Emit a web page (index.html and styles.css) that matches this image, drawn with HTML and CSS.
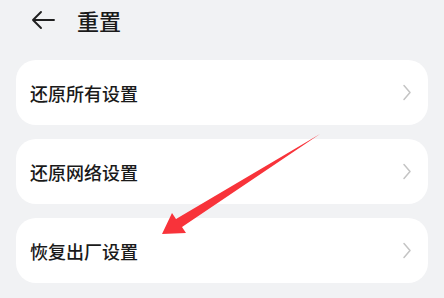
FILE: index.html
```html
<!DOCTYPE html>
<html lang="zh-CN">
<head>
    <meta charset="UTF-8">
    <meta name="viewport" content="width=device-width, initial-scale=1.0">
    <title>重置</title>
    <link rel="stylesheet" href="styles.css">
</head>
<body>

    <!-- 标题栏 -->
    <div class="title-bar">
        <svg class="back-icon" width="24" height="20" viewBox="0 0 24 20">
            <path d="M23 10H2M10 2L2 10L10 18" fill="none" stroke="#1f1f1f" stroke-width="1.9" stroke-linecap="round" stroke-linejoin="round"/>
        </svg>
        <h1>重置</h1>
    </div>

    <div class="list">
        <div class="card">
            <span>还原所有设置</span>
            <svg class="chevron" width="10" height="17" viewBox="0 0 10 17"><path d="M2 1.5L8 8.5L2 15.5" fill="none" stroke="#c4c4c4" stroke-width="1.5" stroke-linecap="round" stroke-linejoin="round"/></svg>
        </div>
        <div class="card">
            <span>还原网络设置</span>
            <svg class="chevron" width="10" height="17" viewBox="0 0 10 17"><path d="M2 1.5L8 8.5L2 15.5" fill="none" stroke="#c4c4c4" stroke-width="1.5" stroke-linecap="round" stroke-linejoin="round"/></svg>
        </div>
        <div class="card">
            <span>恢复出厂设置</span>
            <svg class="chevron" width="10" height="17" viewBox="0 0 10 17"><path d="M2 1.5L8 8.5L2 15.5" fill="none" stroke="#c4c4c4" stroke-width="1.5" stroke-linecap="round" stroke-linejoin="round"/></svg>
        </div>
    </div>

    <!-- 标注箭头 -->
    <svg class="pointer" width="444" height="298" viewBox="0 0 444 298">
        <polygon points="320,134 182,227 186,233 162,234 172,213 176,219" fill="#f8333a"/>
    </svg>

</body>
</html>
```

FILE: styles.css
```css
* {
    margin: 0;
    padding: 0;
    box-sizing: border-box;
}

body {
    font-family: "Noto Sans CJK SC", "Noto Sans", sans-serif;
    background-color: #f1f2f4;
    color: #1a1a1a;
    width: 444px;
    height: 298px;
    overflow: hidden;
    position: relative;
}

.title-bar {
    height: 40px;
    display: flex;
    align-items: center;
    padding-left: 31px;
}

.back-icon {
    margin-right: 22px;
}

.title-bar h1 {
    font-size: 22px;
    font-weight: 500;
    line-height: 1;
}

.list {
    padding: 20px 16px 0;
    display: flex;
    flex-direction: column;
    gap: 14px;
}

.card {
    height: 65px;
    background-color: #ffffff;
    border-radius: 20px;
    display: flex;
    align-items: center;
    justify-content: space-between;
    padding: 0 16px 0 14px;
    font-size: 18px;
    font-weight: 500;
}

.pointer {
    position: absolute;
    left: 0;
    top: 0;
}
```
